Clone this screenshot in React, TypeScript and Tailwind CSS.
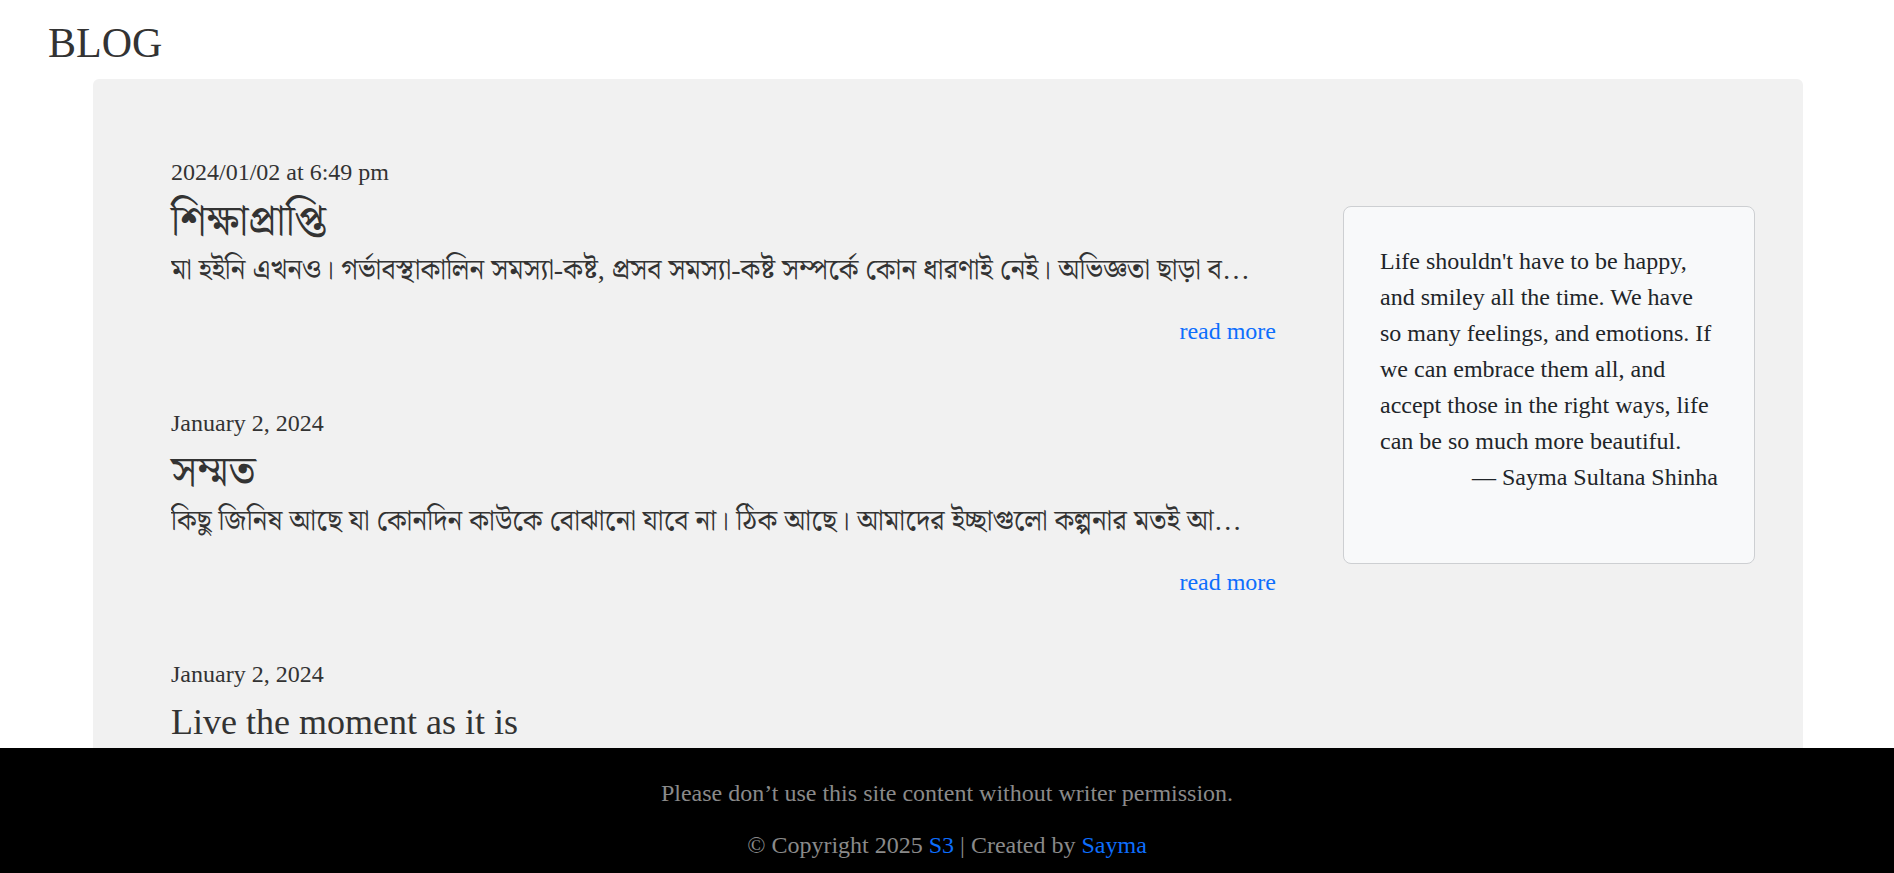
const posts = [
    {
        date: '2024/01/02 at 6:49 pm',
        title: 'শিক্ষাপ্রাপ্তি',
        bn: true,
        excerpt:
            'মা হইনি এখনও। গর্ভাবস্থাকালিন সমস্যা-কষ্ট, প্রসব সমস্যা-কষ্ট সম্পর্কে কোন ধারণাই নেই। অভিজ্ঞতা ছাড়া ব…',
    },
    {
        date: 'January 2, 2024',
        title: 'সম্মত',
        bn: true,
        excerpt: 'কিছু জিনিষ আছে যা কোনদিন কাউকে বোঝানো যাবে না। ঠিক আছে। আমাদের ইচ্ছাগুলো কল্পনার মতই আ…',
    },
    {
        date: 'January 2, 2024',
        title: 'Live the moment as it is',
        bn: false,
        excerpt: 'Life is a collection of small moments, and each one of them deserves to be lived as it is.',
    },
];

interface PostItemProps {
    date: string;
    title: string;
    excerpt: string;
    bn: boolean;
}

function PostItem({ date, title, excerpt, bn }: PostItemProps) {
    return (
        <article className="flex flex-col text-[#333]">
            <p className="text-[24px] leading-[36px]">{date}</p>
            <h4
                className={
                    bn
                        ? 'mt-[9px] mb-[10px] text-[43px] leading-[43px] font-normal'
                        : 'mt-[9px] mb-[10px] text-[36px] leading-[43px] font-normal'
                }
            >
                {title}
            </h4>
            <p className={bn ? 'truncate text-[28px] leading-[36px]' : 'truncate text-[24px] leading-[36px]'}>
                {excerpt}
            </p>
            <div className="mt-[25px] text-right">
                <a href="#" className="text-[24px] leading-[36px] text-[#0d6efd]">
                    read more
                </a>
            </div>
        </article>
    );
}

function QuoteCard() {
    return (
        <figure className="rounded-[8px] border border-[#cdcfd2] bg-[#f8f9fa] px-[36px] pt-[36px] pb-[68px] text-[24px] leading-[36px] text-[#212529]">
            <blockquote>
                Life shouldn't have to be happy, and smiley all the time. We have so many feelings, and emotions. If we
                can embrace them all, and accept those in the right ways, life can be so much more beautiful.
            </blockquote>
            <figcaption className="text-right">— Sayma Sultana Shinha</figcaption>
        </figure>
    );
}

export default function App() {
    return (
        <div className="min-h-screen bg-white font-['Liberation_Serif','Noto_Serif_Bengali','Noto_Sans_Bengali',serif]">
            <h3 className="pt-[18px] pl-[48px] text-[42px] leading-[1.2] font-normal text-[#333]">BLOG</h3>

            <main className="mt-[11px] ml-[93px] flex w-[1710px] rounded-[6px] bg-[#f1f1f1] pt-[75px] pr-[48px] pb-[160px] pl-[78px]">
                <section className="flex w-[1105px] flex-col gap-[56px]">
                    {posts.map((post, i) => (
                        <PostItem key={i} {...post} />
                    ))}
                </section>

                <aside className="ml-[67px] mt-[52px] w-[412px] shrink-0">
                    <QuoteCard />
                </aside>
            </main>

            <footer className="fixed right-0 bottom-0 left-0 h-[125px] bg-black pt-[27px] text-center text-[24px] leading-[36px] text-[#8a8a8a]">
                <p>Please don’t use this site content without writer permission.</p>
                <p className="mt-[16px]">
                    © Copyright 2025{' '}
                    <a href="#" className="text-[#0d6efd]">
                        S3
                    </a>{' '}
                    | Created by{' '}
                    <a href="#" className="text-[#0d6efd]">
                        Sayma
                    </a>
                </p>
            </footer>
        </div>
    );
}
